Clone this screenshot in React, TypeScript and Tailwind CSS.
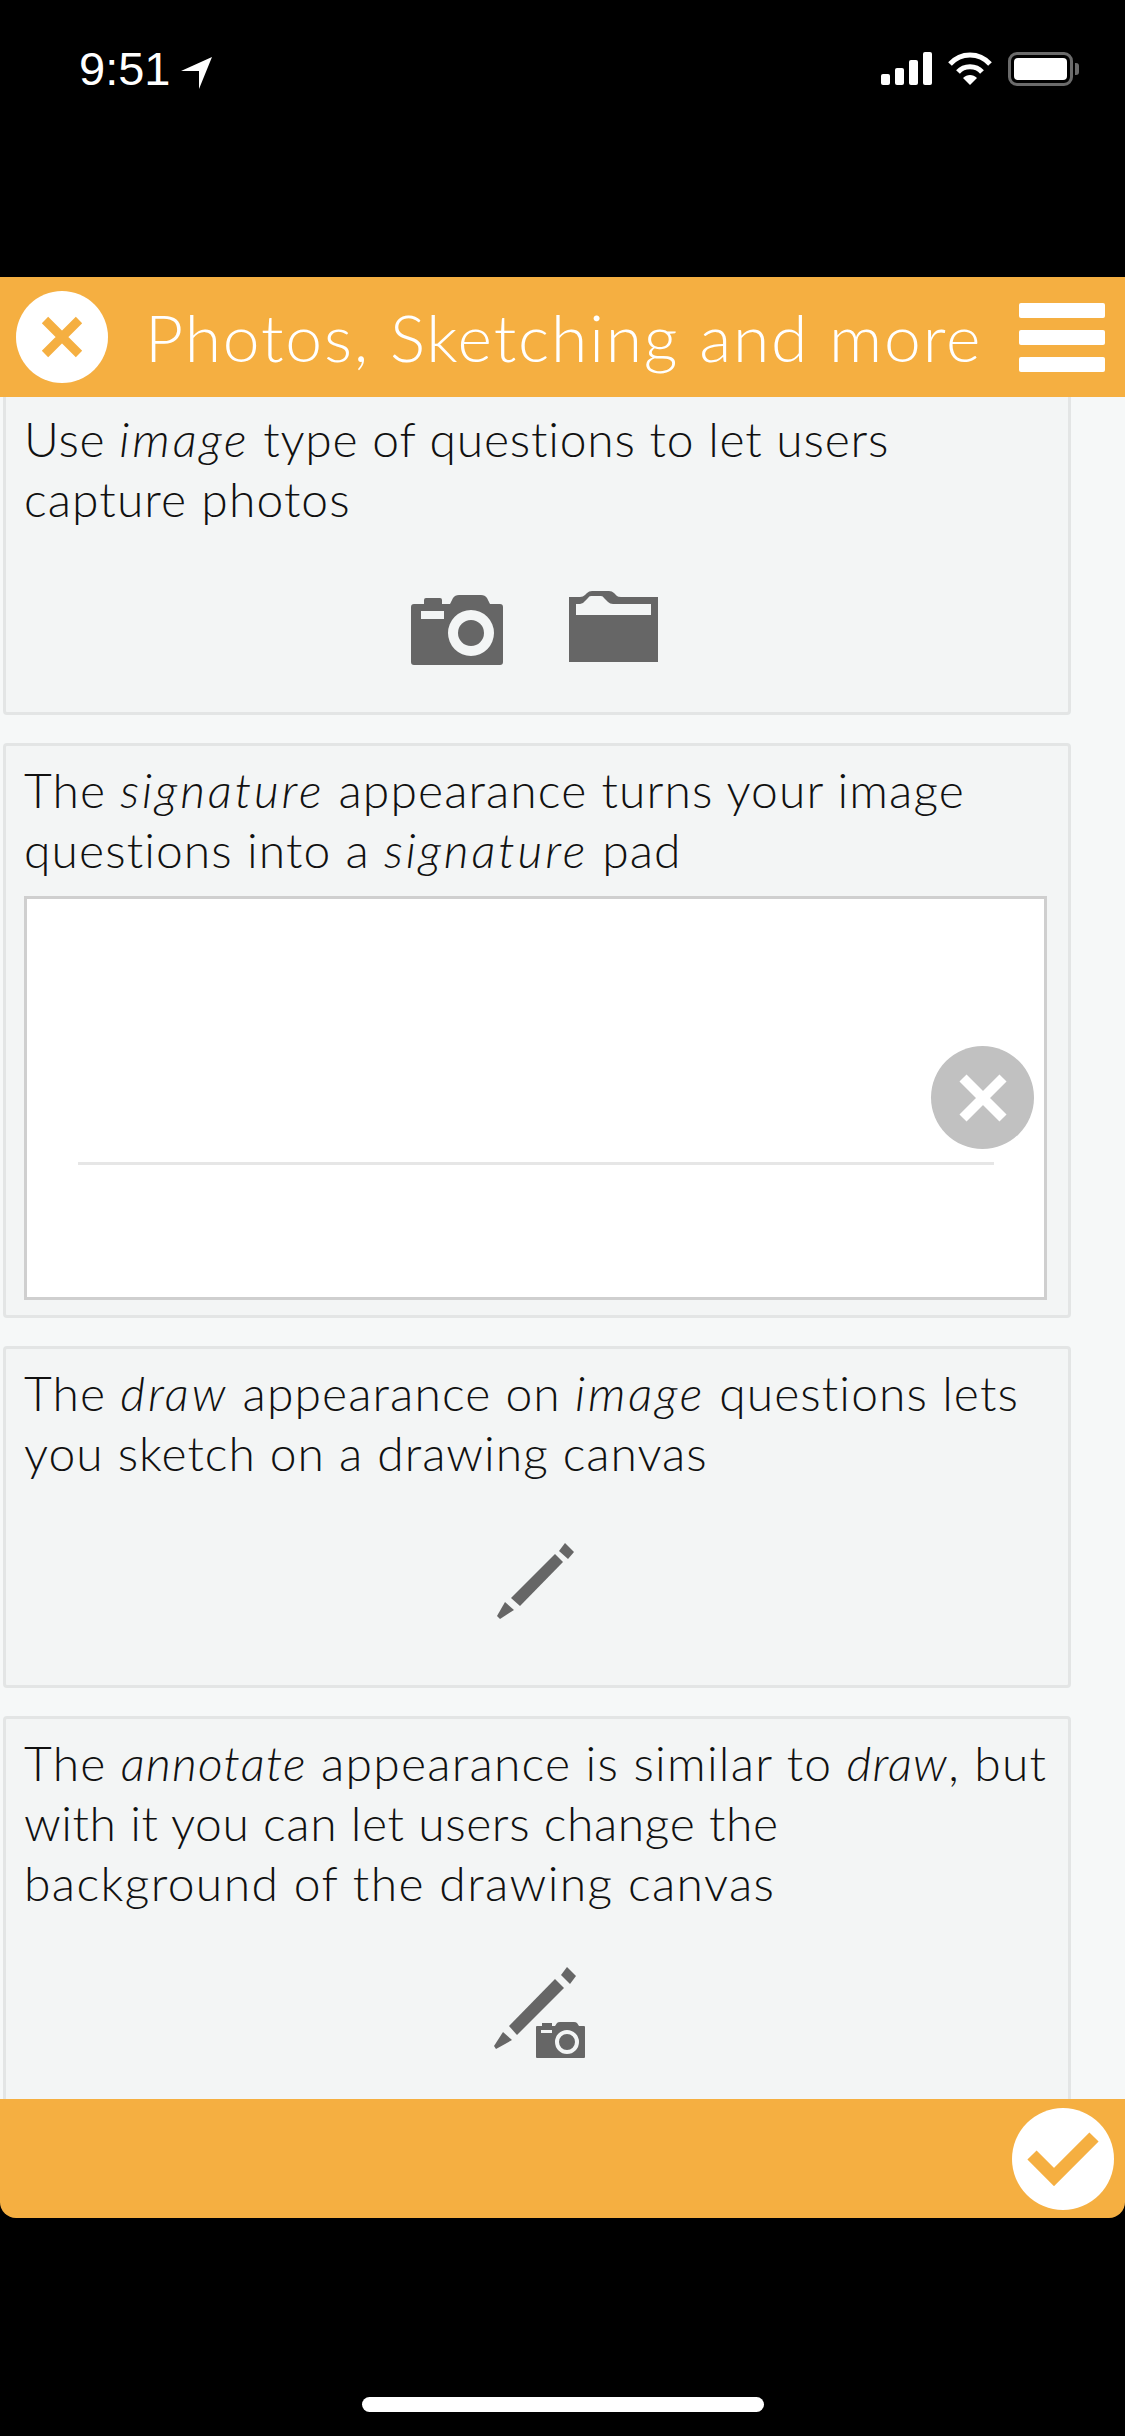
import React from "react";

const FONT = "font-['Lato','Noto_Sans',sans-serif]";

const CameraIcon = ({ className }: { className?: string }) => (
  <svg viewBox="0 0 92 70" className={className} fill="#666666">
    <path
      fillRule="evenodd"
      d="M3 9h10V5a2 2 0 0 1 2-2h14a2 2 0 0 1 2 2v4h8l3-6q2-3 6-3h22q4 0 6 3l3 6h10a3 3 0 0 1 3 3v55a3 3 0 0 1-3 3H3a3 3 0 0 1-3-3V12a3 3 0 0 1 3-3ZM10 16v8h23v-8ZM60 15a23 23 0 1 0 0 46a23 23 0 1 0 0-46ZM60 25a13 13 0 1 1 0 26a13 13 0 1 1 0-26Z"
    />
  </svg>
);

const FolderIcon = ({ className }: { className?: string }) => (
  <svg viewBox="0 0 89 71" className={className} fill="#666666">
    <path
      fillRule="evenodd"
      d="M0 6h11q3 0 5-2l2-2q2-2 5-2h17q3 0 5 2l3 3q1 1 4 1h37v65H0ZM7 13v11h75V13H44q-3 0-5-2l-4-4q-1-2-3-2h-10q-2 0-3 2l-3 3q-2 3-5 3Z"
    />
  </svg>
);

const PencilIcon = ({ className }: { className?: string }) => (
  <svg viewBox="0 0 77 77" className={className} fill="#666666">
    <path d="M58 12l8 8-43 44-9-8Z" />
    <path d="M68 1l9 9-6 7-9-8Z" />
    <path d="M8 60l9 8-14 9-3-3Z" />
  </svg>
);

// pencil with the small camera tucked under its tip
const AnnotateIcon = ({ className }: { className?: string }) => (
  <svg viewBox="0 0 91 91" className={className} fill="#666666">
    <path d="M61 12l9 9-47 47-8-9Z" />
    <path d="M73 0l9 9-6 8-9-9Z" />
    <path d="M9 65l9 8-16 9-2-3Z" />
    <path
      fillRule="evenodd"
      d="M43 59h5v-3h10v3h3l2-3q1-1 3-1h14q2 0 3 1l2 3h5a1 1 0 0 1 1 1v30a1 1 0 0 1-1 1H43a1 1 0 0 1-1-1V60a1 1 0 0 1 1-1ZM47 63v3h11v-3ZM73 63a12 12 0 1 0 0 24a12 12 0 1 0 0-24ZM73 67a8 8 0 1 1 0 16a8 8 0 1 1 0-16Z"
    />
  </svg>
);

const StatusBar = () => (
  <div className="relative h-[277px] shrink-0 bg-black text-white">
    <div className="flex items-center pl-[79px] pt-[46px]">
      <span className="font-['Liberation_Sans',sans-serif] text-[47px] leading-[46px]">9:51</span>
      <svg viewBox="0 0 31 32" className="ml-[11px] mt-[8px] h-[32px] w-[31px]" fill="#fff">
        <path d="M31 0L18 32V14H0Z" />
      </svg>
    </div>
    <div className="absolute left-[881px] top-[52px] flex items-start gap-[15px]">
      <div className="flex h-[33px] items-end gap-[5px]">
        <div className="h-[11px] w-[9px] rounded-[2px] bg-white" />
        <div className="h-[17px] w-[9px] rounded-[2px] bg-white" />
        <div className="h-[25px] w-[9px] rounded-[2px] bg-white" />
        <div className="h-[33px] w-[9px] rounded-[2px] bg-white" />
      </div>
      <svg viewBox="0 0 46 34" className="h-[34px] w-[46px]" fill="none" stroke="#fff" strokeWidth="5">
        <path d="M3 12C14 0 32 0 43 12" />
        <path d="M11 20C17 13 29 13 35 20" />
        <path d="M16 26L23 33L30 26C26 22 20 22 16 26Z" fill="#fff" stroke="none" />
      </svg>
      <div className="flex items-center">
        <div className="h-[34px] w-[65px] rounded-[9px] border-[3px] border-[#6b6b6b] p-[3px]">
          <div className="h-full w-full rounded-[4px] bg-white" />
        </div>
        <div className="ml-[2px] h-[12px] w-[4px] rounded-r-[3px] bg-[#6b6b6b]" />
      </div>
    </div>
  </div>
);

const Header = () => (
  <header className="flex h-[120px] shrink-0 items-center bg-[#f5af41] pl-[16px] pr-[20px]">
    <div className="flex h-[92px] w-[92px] shrink-0 items-center justify-center rounded-full bg-white">
      <svg viewBox="0 0 44 44" className="h-[44px] w-[44px]" stroke="#f5af41" strokeWidth="9">
        <path d="M5 5L39 39M39 5L5 39" />
      </svg>
    </div>
    <h1 className={`${FONT} ml-[37px] flex-1 whitespace-nowrap text-[66px] font-light leading-none tracking-[1.85px] text-white`}>
      Photos, Sketching and more
    </h1>
    <div className="flex w-[86px] shrink-0 flex-col gap-[12px]">
      <div className="h-[15px] rounded-[2px] bg-white" />
      <div className="h-[15px] rounded-[2px] bg-white" />
      <div className="h-[15px] rounded-[2px] bg-white" />
    </div>
  </header>
);

const Card = ({ children, className = "" }: { children: React.ReactNode; className?: string }) => (
  <section
    className={`${FONT} mx-[3px] mb-[28px] w-[1068px] rounded-[4px] border-[3px] border-[#e3e5e5] bg-[#f3f5f5] pl-[18px] pr-[21px] pt-[14px] text-[48px] font-light leading-[60px] tracking-[1.1px] text-[#111] ${className}`}
  >
    {children}
  </section>
);

const Em = ({ children }: { children: React.ReactNode }) => (
  <em className="tracking-[2.9px]">{children}</em>
);

const SignaturePad = () => (
  <div className="relative mt-[16px] h-[404px] border-[3px] border-[#cfcfcf] bg-white">
    <div className="absolute left-[51px] right-[50px] top-[263px] h-[3px] bg-[#e6e6e6]" />
    <div className="absolute right-[10px] top-[147px] flex h-[103px] w-[103px] items-center justify-center rounded-full bg-[#c1c1c1]">
      <svg viewBox="0 0 48 48" className="h-[48px] w-[48px]" stroke="#fff" strokeWidth="10">
        <path d="M4 4L44 44M44 4L4 44" />
      </svg>
    </div>
  </div>
);

export default function App() {
  return (
    <div className="flex h-[2436px] w-[1125px] flex-col overflow-hidden bg-black">
      <StatusBar />
      <Header />

      <main className="h-[1702px] shrink-0 overflow-hidden bg-[#f6f8f8] pt-[1px]">
        <div className="-mt-[6px]">
          <Card className="h-[323px]">
            <p className="whitespace-nowrap">
              <span className="tracking-[0.8px]">
                Use <Em>image</Em> type of questions to let users
              </span>
              <br />
              capture photos
            </p>
            <div className="mt-[62px] flex items-start justify-center gap-[66px] pr-[3px]">
              <CameraIcon className="mt-[4px] h-[70px] w-[92px]" />
              <FolderIcon className="h-[71px] w-[89px]" />
            </div>
          </Card>

          <Card className="h-[575px]">
            <p className="whitespace-nowrap">
              The <Em>signature</Em> appearance turns your image
              <br />
              questions into a <Em>signature</Em> pad
            </p>
            <SignaturePad />
          </Card>

          <Card className="h-[342px]">
            <p className="whitespace-nowrap">
              The <Em>draw</Em> appearance on <Em>image</Em> questions lets
              <br />
              <span className="tracking-[1px]">you sketch on a drawing canvas</span>
            </p>
            <div className="mt-[59px] flex justify-center pr-[1px]">
              <PencilIcon className="h-[77px] w-[77px]" />
            </div>
          </Card>

          <Card className="pb-[60px]">
            <p className="whitespace-nowrap">
              <span className="tracking-[1.25px]">
                The <em>annotate</em> appearance is similar to <em>draw</em>, but
              </span>
              <br />
              <span className="tracking-[0.6px]">with it you can let users change the</span>
              <br />
              <span className="tracking-[1.4px]">background of the drawing canvas</span>
            </p>
            <div className="mt-[54px] flex justify-center pl-[8px]">
              <AnnotateIcon className="h-[91px] w-[91px]" />
            </div>
          </Card>
        </div>
      </main>

      <footer className="flex h-[119px] shrink-0 items-center justify-end rounded-b-[16px] bg-[#f5af41] pr-[11px]">
        <div className="flex h-[102px] w-[102px] items-center justify-center rounded-full bg-white">
          <svg viewBox="0 0 72 54" className="h-[54px] w-[72px]" fill="none" stroke="#f5af41" strokeWidth="13">
            <path d="M5 23L27 45L67 5" />
          </svg>
        </div>
      </footer>

      <div className="flex flex-1 items-end justify-center pb-[24px]">
        <div className="h-[15px] w-[402px] rounded-full bg-white" />
      </div>
    </div>
  );
}
